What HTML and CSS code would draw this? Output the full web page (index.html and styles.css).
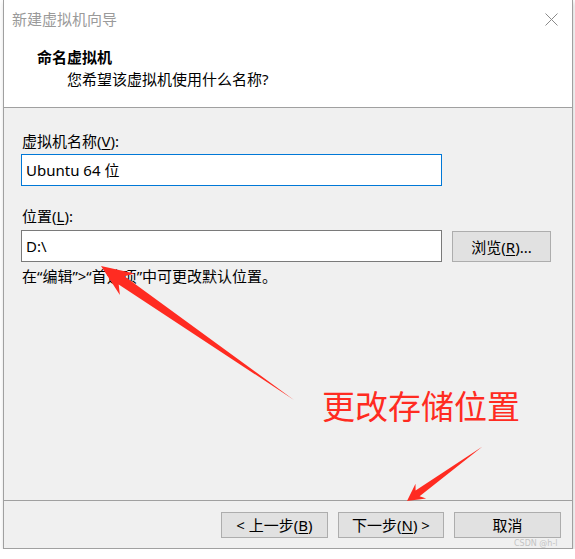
FILE: index.html
```html
<!DOCTYPE html>
<html lang="zh">

<head>
    <meta charset="utf-8">
    <title>新建虚拟机向导</title>
    <link rel="stylesheet" href="styles.css">
</head>

<body>
    <div class="win">
        <div class="titlebar">
            <span class="title">新建虚拟机向导</span>
            <svg class="close" width="13" height="13" viewBox="0 0 13 13">
                <path d="M0.5 0.5 L12.5 12.5 M12.5 0.5 L0.5 12.5" stroke="#8a8a8a" stroke-width="1" fill="none" />
            </svg>
        </div>

        <div class="head">
            <div class="head-title">命名虚拟机</div>
            <div class="head-sub">您希望该虚拟机使用什么名称?</div>
        </div>

        <div class="content">
            <div class="lbl">虚拟机名称(<u>V</u>):</div>
            <div class="field focus">Ubuntu 64 位</div>

            <div class="lbl lbl-loc">位置(<u>L</u>):</div>
            <div class="row">
                <div class="field">D:\</div>
                <button class="btn btn-browse">浏览(<u>R</u>)...</button>
            </div>

            <p class="hint">在“编辑”&gt;“首选项”中可更改默认位置。</p>
        </div>

        <div class="foot">
            <button class="btn">&lt; 上一步(<u>B</u>)</button>
            <button class="btn">下一步(<u>N</u>) &gt;</button>
            <button class="btn">取消</button>
        </div>
    </div>

    <!-- annotations on top of the screenshot -->
    <svg class="marks" width="575" height="559" viewBox="0 0 575 559">
        <polygon fill="#ff2b21" points="101,266 134.7,273.5 124.4,276.2 294,400 118.7,284.4 119.9,294.9" />
        <polygon fill="#ff2b21" points="407,501 415.5,483.8 415.6,490.6 482.5,446.5 419.6,496.2 426.1,498.4" />
    </svg>
    <div class="note">更改存储位置</div>
    <span class="wm">CSDN @h-l</span>
</body>

</html>
```

FILE: styles.css
```css
body {
    margin: 0;
    background-color: white;
    font-family: "Noto Sans", "Noto Sans CJK SC", sans-serif;
    font-size: 15px;
    color: black;
}

.win {
    width: 568px;
    margin-left: 3px;
    border: 1px solid #a0a0a0;
    border-top: none;
    box-shadow: 1px 2px 5px rgba(0, 0, 0, 0.18);
}

.titlebar {
    height: 38px;
    display: flex;
    align-items: center;
    justify-content: space-between;
    padding: 0 14px 0 8px;
    background-color: white;
}

.title {
    color: #9a9a9a;
    line-height: 20px;
}

.close {
    margin-top: 0;
}

.head {
    height: 70px;
    background-color: white;
    border-bottom: 1px solid #a0a0a0;
    padding-left: 33px;
    box-sizing: border-box;
    padding-top: 9px;
}

.head-title {
    font-weight: bold;
    line-height: 20px;
}

.head-sub {
    line-height: 20px;
    margin-top: 2px;
    padding-left: 30px;
}

.content {
    height: 393px;
    box-sizing: border-box;
    background-color: #f0f0f0;
    border-bottom: 1px solid #a0a0a0;
    padding: 23px 0 0 17px;
}

.lbl {
    line-height: 20px;
    padding-left: 1px;
}

.lbl-loc {
    margin-top: 20px;
}

.field {
    width: 421px;
    height: 32px;
    box-sizing: border-box;
    border: 1px solid #7a7a7a;
    background-color: white;
    padding-left: 4px;
    line-height: 30px;
    margin-top: 3px;
}

.focus {
    border-color: #0078d7;
}

.row {
    display: flex;
    align-items: flex-start;
    gap: 10px;
    margin-top: 4px;
}

.row .field {
    margin-top: 0;
}

.btn {
    font-family: inherit;
    font-size: 15px;
    color: black;
    background-color: #e1e1e1;
    border: 1px solid #adadad;
    width: 107px;
    height: 26px;
    padding: 0;
    line-height: 22px;
}

.btn-browse {
    width: 99px;
    height: 31px;
    margin-top: 1px;
}

.hint {
    margin: 4px 0 0 1px;
    line-height: 20px;
}

.foot {
    height: 47px;
    box-sizing: border-box;
    background-color: #f0f0f0;
    display: flex;
    justify-content: flex-end;
    gap: 10px;
    padding: 11px 11px 0 0;
}

.foot .btn:nth-child(2) {
    width: 106px;
}

u {
    text-underline-offset: 2px;
}

.marks {
    position: absolute;
    top: 0;
    left: 0;
    pointer-events: none;
}

.note {
    position: absolute;
    left: 322px;
    top: 387px;
    font-family: "Noto Sans CJK SC", sans-serif;
    font-size: 33px;
    line-height: 36px;
    color: #ff2b21;
}

.wm {
    position: absolute;
    left: 514px;
    top: 539px;
    font-family: "DejaVu Sans", sans-serif;
    font-size: 8px;
    color: #c4c4c4;
}
```
